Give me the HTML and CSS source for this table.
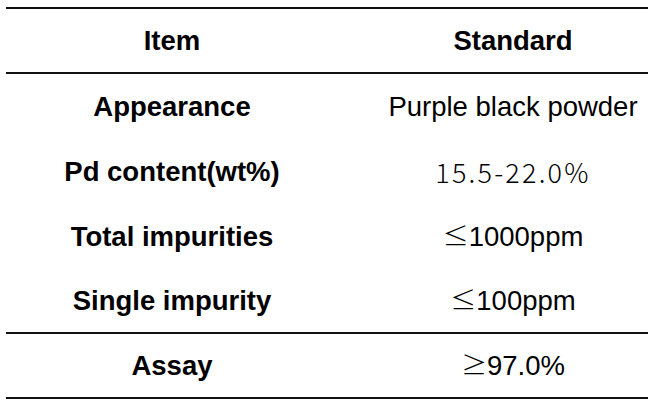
FILE: index.html
```html
<!DOCTYPE html>
<html>
<head>
<meta charset="utf-8">
<link rel="stylesheet" href="styles.css">
</head>
<body>
<div class="spec">
  <div class="row head">
    <div class="cell"><span class="t b">Item</span></div>
    <div class="cell val"><span class="t b">Standard</span></div>
  </div>
  <div class="row">
    <div class="cell"><span class="t b">Appearance</span></div>
    <div class="cell val"><span class="t">Purple black powder</span></div>
  </div>
  <div class="row">
    <div class="cell"><span class="t b">Pd content(wt%)</span></div>
    <div class="cell val"><span class="g">15.5-22.0%</span></div>
  </div>
  <div class="row">
    <div class="cell"><span class="t b">Total impurities</span></div>
    <div class="cell val"><span class="t"><span class="sym">≤</span>1000ppm</span></div>
  </div>
  <div class="row sep">
    <div class="cell"><span class="t b">Single impurity</span></div>
    <div class="cell val"><span class="t"><span class="sym">≤</span>100ppm</span></div>
  </div>
  <div class="row last">
    <div class="cell"><span class="t b">Assay</span></div>
    <div class="cell val"><span class="t"><span class="sym">≥</span>97.0%</span></div>
  </div>
</div>
</body>
</html>
```

FILE: styles.css
```css
html, body {
  margin: 0;
  padding: 0;
  background: #fff;
  overflow: hidden;
  width: 648px;
  height: 404px;
}
body {
  padding-top: 7px;
  padding-left: 6px;
  box-sizing: border-box;
  font-family: "Liberation Sans", Arial, sans-serif;
  color: #000;
}
.spec {
  width: 642px;
  border-top: 2px solid #111;
}
.row {
  display: grid;
  grid-template-columns: 332px 1fr;
  height: 65px;
  align-items: center;
}
.head,
.sep,
.last {
  height: 63px;
  border-bottom: 2px solid #111;
}
.cell {
  display: flex;
  justify-content: center;
  align-items: center;
  white-space: nowrap;
}
.val {
  padding-left: 40px;
}
.t {
  font-size: 27.5px;
  line-height: 1;
}
.b {
  font-weight: bold;
}
.g {
  font-family: "Noto Sans CJK KR", "DejaVu Sans", sans-serif;
  font-weight: 300;
  font-size: 27px;
  line-height: 1;
  letter-spacing: 2.2px;
  color: #000;
}
.sym {
  font-family: "Noto Sans CJK KR", "DejaVu Sans", sans-serif;
  font-weight: 300;
  font-size: 26px;
}
```
